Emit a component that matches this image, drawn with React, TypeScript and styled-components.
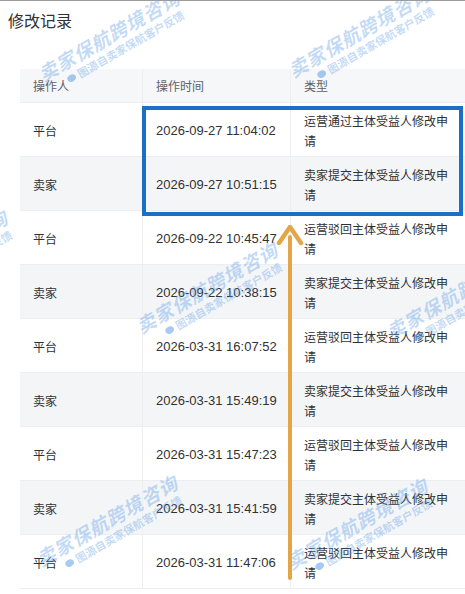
import React from "react";
import styled, { createGlobalStyle } from "styled-components";

const GlobalStyle = createGlobalStyle`
  html, body { margin: 0; padding: 0; background: #ffffff; }
  body { font-family: "Liberation Sans", "Noto Sans CJK SC", sans-serif; }
  * { box-sizing: border-box; }
`;

const Page = styled.div`
  position: relative;
  width: 465px;
  height: 594px;
  overflow: hidden;
  background: #ffffff;
  border-top: 1px solid #9c9c9c;
`;

const Title = styled.h2`
  margin: 0;
  padding: 8px 0 0 8px;
  height: 68px;
  font-size: 16px;
  line-height: 22px;
  font-weight: 400;
  color: #303133;
  font-family: "Noto Sans CJK SC", sans-serif;
`;

const Table = styled.div`
  margin-left: 20px;
  width: 445px;
  display: flex;
  flex-direction: column;
`;

const Row = styled.div<{ $striped?: boolean; $head?: boolean }>`
  display: grid;
  grid-template-columns: 123px 148px 174px;
  height: ${(p) => (p.$head ? "34px" : "54px")};
  background: ${(p) => (p.$head ? "#f6f7f9" : p.$striped ? "#f4f5f7" : "#ffffff")};
  border-bottom: 1px solid #eceef2;
`;

const Cell = styled.div<{ $head?: boolean; $mono?: boolean; $last?: boolean }>`
  display: flex;
  align-items: center;
  padding: 0 13px;
  border-right: ${(p) => (p.$last ? "none" : "1px solid #eceef2")};
  font-family: ${(p) =>
    p.$mono ? `"Liberation Sans", "Noto Sans CJK SC", sans-serif` : `"Noto Sans CJK SC", sans-serif`};
  font-size: ${(p) => (p.$mono ? "13px" : "12px")};
  line-height: 20px;
  color: ${(p) => (p.$head ? "#5f6166" : "#303133")};
  padding-top: ${(p) => (p.$head ? "0" : "3px")};
`;

const Highlight = styled.div`
  position: absolute;
  left: 142px;
  top: 105px;
  width: 321px;
  height: 110px;
  border: 4px solid #1b6fc6;
  pointer-events: none;
`;

const ArrowSvg = styled.svg`
  position: absolute;
  left: 276px;
  top: 224px;
  pointer-events: none;
`;

const Mark = styled.div`
  position: absolute;
  transform: rotate(-30deg);
  transform-origin: left bottom;
  pointer-events: none;
  white-space: nowrap;
  font-family: "Noto Sans CJK SC", sans-serif;
  color: rgba(80, 150, 230, 0.34);
`;

const MarkMain = styled.div`
  font-size: 19px;
  font-weight: 600;
  font-style: italic;
  line-height: 22px;
  letter-spacing: 1px;
`;

const MarkSub = styled.div`
  display: flex;
  align-items: center;
  gap: 3px;
  margin-left: 22px;
  font-size: 11px;
  font-weight: 600;
  line-height: 14px;
`;

const Blob = styled.span`
  display: inline-block;
  width: 9px;
  height: 7px;
  border-radius: 50%;
  background: rgba(80, 150, 230, 0.5);
`;

const rows = [
  { who: "平台", time: "2026-09-27 11:04:02", type: "运营通过主体受益人修改申请" },
  { who: "卖家", time: "2026-09-27 10:51:15", type: "卖家提交主体受益人修改申请" },
  { who: "平台", time: "2026-09-22 10:45:47", type: "运营驳回主体受益人修改申请" },
  { who: "卖家", time: "2026-09-22 10:38:15", type: "卖家提交主体受益人修改申请" },
  { who: "平台", time: "2026-03-31 16:07:52", type: "运营驳回主体受益人修改申请" },
  { who: "卖家", time: "2026-03-31 15:49:19", type: "卖家提交主体受益人修改申请" },
  { who: "平台", time: "2026-03-31 15:47:23", type: "运营驳回主体受益人修改申请" },
  { who: "卖家", time: "2026-03-31 15:41:59", type: "卖家提交主体受益人修改申请" },
  { who: "平台", time: "2026-03-31 11:47:06", type: "运营驳回主体受益人修改申请" },
];

const marks = [
  { x: 52, y: 60 },
  { x: 302, y: 56 },
  { x: -120, y: 280 },
  { x: 150, y: 312 },
  { x: 400, y: 318 },
  { x: 50, y: 545 },
  { x: 300, y: 548 },
];

export default function App() {
  return (
    <>
      <GlobalStyle />
      <Page>
        <Title>修改记录</Title>
        <Table>
          <Row $head>
            <Cell $head>操作人</Cell>
            <Cell $head>操作时间</Cell>
            <Cell $head $last>类型</Cell>
          </Row>
          {rows.map((r, i) => (
            <Row key={i} $striped={i % 2 === 1}>
              <Cell>{r.who}</Cell>
              <Cell $mono>{r.time}</Cell>
              <Cell $last>{r.type}</Cell>
            </Row>
          ))}
        </Table>
        {marks.map((m, i) => (
          <Mark key={i} style={{ left: m.x, top: m.y }}>
            <MarkMain>卖家保航跨境咨询</MarkMain>
            <MarkSub>
              <Blob />
              图源自卖家保航客户反馈
            </MarkSub>
          </Mark>
        ))}
        <Highlight />
        <ArrowSvg width="28" height="356" viewBox="0 0 28 356">
          <line x1="14" y1="12" x2="14" y2="353" stroke="#e3a546" strokeWidth="4" strokeLinecap="round" />
          <path d="M3 18 L14 2 L25 18" fill="none" stroke="#e3a546" strokeWidth="4.5" strokeLinecap="round" strokeLinejoin="round" />
        </ArrowSvg>
      </Page>
    </>
  );
}
